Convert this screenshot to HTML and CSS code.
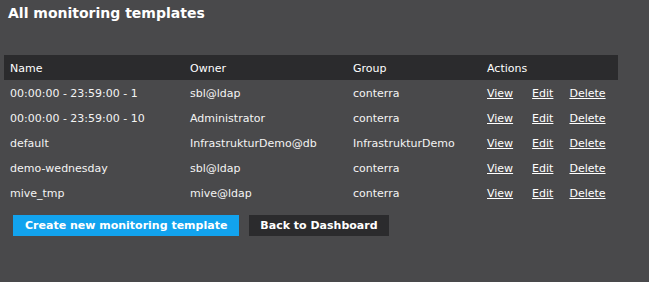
FILE: index.html
```html
<!DOCTYPE html>
<html lang="en">
<head>
    <meta charset="UTF-8">
    <title>All monitoring templates</title>
    <link rel="stylesheet" href="styles.css">
</head>
<body>
    <div class="page">
        <h1>All monitoring templates</h1>

        <table class="templates">
            <thead>
                <tr>
                    <th class="col-name">Name</th>
                    <th class="col-owner">Owner</th>
                    <th class="col-group">Group</th>
                    <th class="col-actions">Actions</th>
                </tr>
            </thead>
            <tbody>
                <tr>
                    <td>00:00:00 - 23:59:00 - 1</td>
                    <td>sbl@ldap</td>
                    <td>conterra</td>
                    <td class="actions"><a href="#" class="view">View</a><a href="#" class="edit">Edit</a><a href="#">Delete</a></td>
                </tr>
                <tr>
                    <td>00:00:00 - 23:59:00 - 10</td>
                    <td>Administrator</td>
                    <td>conterra</td>
                    <td class="actions"><a href="#" class="view">View</a><a href="#" class="edit">Edit</a><a href="#">Delete</a></td>
                </tr>
                <tr>
                    <td>default</td>
                    <td>InfrastrukturDemo@db</td>
                    <td>InfrastrukturDemo</td>
                    <td class="actions"><a href="#" class="view">View</a><a href="#" class="edit">Edit</a><a href="#">Delete</a></td>
                </tr>
                <tr>
                    <td>demo-wednesday</td>
                    <td>sbl@ldap</td>
                    <td>conterra</td>
                    <td class="actions"><a href="#" class="view">View</a><a href="#" class="edit">Edit</a><a href="#">Delete</a></td>
                </tr>
                <tr>
                    <td>mive_tmp</td>
                    <td>mive@ldap</td>
                    <td>conterra</td>
                    <td class="actions"><a href="#" class="view">View</a><a href="#" class="edit">Edit</a><a href="#">Delete</a></td>
                </tr>
            </tbody>
        </table>

        <div class="buttons">
            <a href="#" class="btn btn-primary">Create new monitoring template</a>
            <a href="#" class="btn btn-dark">Back to Dashboard</a>
        </div>
    </div>
</body>
</html>
```

FILE: styles.css
```css
* {
    margin: 0;
    padding: 0;
    box-sizing: border-box;
}

body {
    background: #49494b;
    color: #fff;
    font-family: Tahoma, "DejaVu Sans", Verdana, sans-serif;
    font-size: 11px;
}

.page {
    padding: 4px 4px;
}

h1 {
    font-size: 14px;
    font-weight: bold;
    line-height: 18px;
    padding-left: 4px;
    margin-bottom: 33px;
}

.templates {
    border-collapse: collapse;
    width: 614px;
}

.templates th {
    background: #2b2b2d;
    text-align: left;
    font-weight: normal;
    height: 25px;
    padding: 1px 6px 0;
}

.templates td {
    height: 25px;
    padding: 1px 6px 0;
    color: #f4f4f4;
    white-space: nowrap;
}

.col-name { width: 180px; }
.col-owner { width: 163px; }
.col-group { width: 134px; }
.col-actions { width: 137px; }

.actions a {
    color: #fff;
    text-decoration: underline;
}

.actions .view {
    margin-right: 19px;
}

.actions .edit {
    margin-right: 16px;
}

.buttons {
    display: flex;
    gap: 10px;
    margin-top: 10px;
    padding-left: 9px;
}

.btn {
    display: inline-block;
    height: 21px;
    line-height: 21px;
    padding: 0 12px;
    color: #fff;
    font-weight: bold;
    text-decoration: none;
}

.btn-primary {
    background: #12a3ee;
}

.btn-dark {
    background: #2b2b2d;
    padding: 0 11px;
}
```
